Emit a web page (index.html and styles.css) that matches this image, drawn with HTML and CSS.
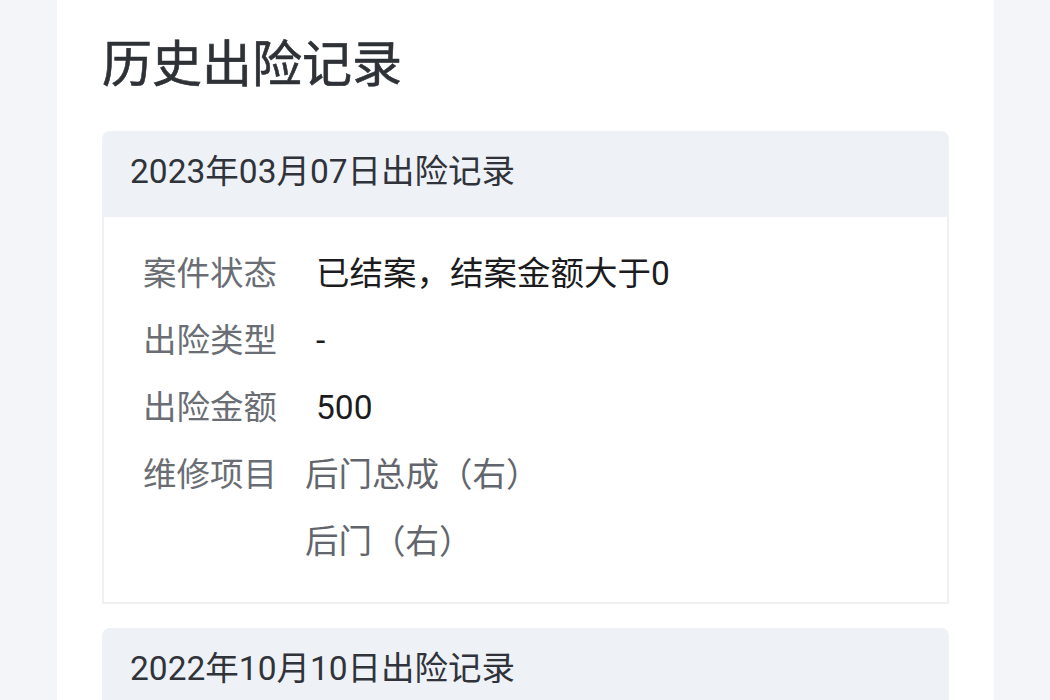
FILE: index.html
```html
<!DOCTYPE html>
<html lang="zh-CN">
<head>
<meta charset="utf-8">
<link rel="stylesheet" href="styles.css">
</head>
<body>
<div class="page">
  <main class="sheet">
    <h1 class="title">历史出险记录</h1>
    <section class="record">
      <div class="record-head">2023年03月07日出险记录</div>
      <div class="record-body">
        <div class="row"><span class="label">案件状态</span><span class="value">已结案，结案金额大于0</span></div>
        <div class="row"><span class="label">出险类型</span><span class="value">-</span></div>
        <div class="row"><span class="label">出险金额</span><span class="value">500</span></div>
        <div class="row"><span class="label">维修项目</span>
          <div class="items">
            <span class="item">后门总成（右）</span>
            <span class="item">后门（右）</span>
          </div>
        </div>
      </div>
    </section>
    <section class="record">
      <div class="record-head">2022年10月10日出险记录</div>
      <div class="record-body record-body-empty"></div>
    </section>
  </main>
</div>
</body>
</html>
```

FILE: styles.css
```css
html, body {
  margin: 0;
  padding: 0;
  background: #f4f5f8;
  font-family: Roboto, "Noto Sans CJK SC", sans-serif;
}
.page {
  display: flex;
  padding: 0 56px 0 57px;
  min-height: 700px;
}
.sheet {
  flex: 1;
  background: #ffffff;
  padding: 33px 45px 40px;
}
.title {
  margin: 0;
  font-size: 50px;
  line-height: 64px;
  font-weight: 400;
  color: #2e3236;
  -webkit-text-stroke: 0.6px #2e3236;
}
.record {
  margin-top: 34px;
}
.record + .record {
  margin-top: 24px;
}
.record-head {
  box-sizing: border-box;
  height: 86px;
  display: flex;
  align-items: center;
  padding: 0 28px 12px;
  background: #eef1f6;
  border-radius: 8px 8px 0 0;
  font-size: 33.5px;
  color: #30343a;
}
.record-body {
  border: 2px solid #eef0f3;
  border-top: none;
  padding: 23px 39px 27px;
}
.record-body-empty {
  min-height: 60px;
}
.row {
  display: flex;
  align-items: flex-start;
  font-size: 33.5px;
  line-height: 67px;
}
.label {
  width: 134px;
  flex: none;
  color: #6a6e74;
}
.value {
  margin-left: 39px;
  color: #1c1c1e;
}
.items {
  margin-left: 28px;
  display: flex;
  flex-direction: column;
}
.item {
  color: #62666c;
}
```
